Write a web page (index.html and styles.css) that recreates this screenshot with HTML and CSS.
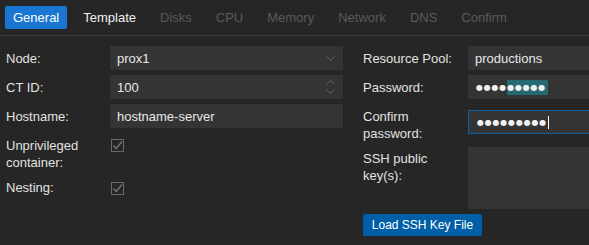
FILE: index.html
```html
<!DOCTYPE html>
<html>
<head>
<meta charset="utf-8">
<link rel="stylesheet" href="styles.css">
</head>
<body>
<div class="tabbar">
  <div class="tab active">General</div>
  <div class="tab enabled">Template</div>
  <div class="tab">Disks</div>
  <div class="tab">CPU</div>
  <div class="tab">Memory</div>
  <div class="tab">Network</div>
  <div class="tab">DNS</div>
  <div class="tab">Confirm</div>
</div>
<div class="form">
  <div class="col">
    <div class="field">
      <div class="label">Node:</div>
      <div class="input"><span>prox1</span>
        <svg class="trigger" width="9" height="5" viewBox="0 0 9 5"><path d="M0.5 0.5 L4.5 4.5 L8.5 0.5" fill="none" stroke="#646464" stroke-width="1"/></svg>
      </div>
    </div>
    <div class="field">
      <div class="label">CT ID:</div>
      <div class="input"><span>100</span>
        <svg class="trigger" width="9" height="14" viewBox="0 0 9 14"><path d="M0.5 4 L4.5 0.5 L8.5 4" fill="none" stroke="#646464" stroke-width="1"/><path d="M0.5 9.5 L4.5 13.5 L8.5 9.5" fill="none" stroke="#646464" stroke-width="1"/></svg>
      </div>
    </div>
    <div class="field">
      <div class="label">Hostname:</div>
      <div class="input"><span>hostname-server</span></div>
    </div>
    <div class="field">
      <div class="label">Unprivileged<br>container:</div>
      <svg class="check" width="13" height="13" viewBox="0 0 13 13"><rect x="0.5" y="0.5" width="12" height="12" fill="none" stroke="#6a6a6a"/><path d="M2.5 6.5 L5.2 9.5 L11 2.5" fill="none" stroke="#7c7c7c" stroke-width="1.2"/></svg>
    </div>
    <div class="field">
      <div class="label">Nesting:</div>
      <svg class="check" width="13" height="13" viewBox="0 0 13 13"><rect x="0.5" y="0.5" width="12" height="12" fill="none" stroke="#6a6a6a"/><path d="M2.5 6.5 L5.2 9.5 L11 2.5" fill="none" stroke="#7c7c7c" stroke-width="1.2"/></svg>
    </div>
  </div>
  <div class="col right">
    <div class="field">
      <div class="label">Resource Pool:</div>
      <div class="input"><span>productions</span></div>
    </div>
    <div class="field">
      <div class="label">Password:</div>
      <div class="input"><span class="dots">●●●●<span class="sel">●●●●●</span></span></div>
    </div>
    <div class="field">
      <div class="label">Confirm<br>password:</div>
      <div class="input focus"><span class="dots">●●●●●●●●●</span><span class="caret"></span></div>
    </div>
    <div class="field">
      <div class="label">SSH public<br>key(s):</div>
      <div class="input textarea"></div>
    </div>
    <button class="btn">Load SSH Key File</button>
  </div>
</div>
</body>
</html>
```
FILE: styles.css
```css
html, body {
  margin: 0;
  padding: 0;
}
body {
  background: #262626;
  color: #e4e4e4;
  font-family: "Liberation Sans", Arial, sans-serif;
  font-size: 13px;
  overflow: hidden;
  width: 589px;
  height: 245px;
}
.tabbar {
  display: flex;
  gap: 8px;
  padding: 6px 5px;
  border-bottom: 1px solid #3c3c3c;
}
.tab {
  padding: 0 8px;
  line-height: 23px;
  height: 23px;
  color: #5a5a5a;
  border-radius: 2px;
  white-space: nowrap;
}
.tab.active {
  background: #1976d2;
  color: #ffffff;
}
.tab.enabled {
  color: #f0f0f0;
}
.form {
  display: flex;
  gap: 20px;
  padding: 10px 0 0 6px;
}
.col {
  display: flex;
  flex-direction: column;
  flex-shrink: 0;
  width: 337px;
}
.col.right {
  width: 338px;
}
.field {
  display: flex;
  align-items: flex-start;
  margin-bottom: 5px;
}
.label {
  width: 104px;
  flex-shrink: 0;
  padding-top: 3.5px;
  line-height: 17px;
  color: #e2e2e2;
}
.right .label {
  width: 105px;
}
.input {
  box-sizing: border-box;
  width: 233px;
  height: 24px;
  flex-shrink: 0;
  background: #343434;
  padding: 0 8px 0 7px;
  display: flex;
  align-items: center;
  justify-content: space-between;
  color: #e8e8e8;
  white-space: nowrap;
}
.input.focus {
  margin-top: 6px;
  border: 1px solid #0f5fa3;
  padding-left: 7px;
  justify-content: flex-start;
}
.input.textarea {
  height: 62px;
}
.trigger {
  display: block;
  flex-shrink: 0;
}
.dots {
  font-family: "DejaVu Sans", sans-serif;
  font-size: 8px;
  letter-spacing: 0.8px;
  color: #f2f2f2;
  display: flex;
  align-items: center;
  margin-left: 1px;
}
.sel {
  background: #266b73;
  height: 15px;
  line-height: 15px;
  display: inline-block;
  padding-right: 2px;
}
.caret {
  display: inline-block;
  width: 1px;
  height: 13px;
  background: #ffffff;
  margin-left: 1px;
}
.check {
  display: block;
  margin-top: 6px;
  margin-left: 1px;
  flex-shrink: 0;
}
.btn {
  align-self: flex-start;
  width: 119px;
  height: 22px;
  border: none;
  border-radius: 2px;
  background: #005fa6;
  color: #ffffff;
  font-family: "Liberation Sans", Arial, sans-serif;
  font-size: 12px;
  padding: 0;
  margin: 0;
  cursor: pointer;
}
```
